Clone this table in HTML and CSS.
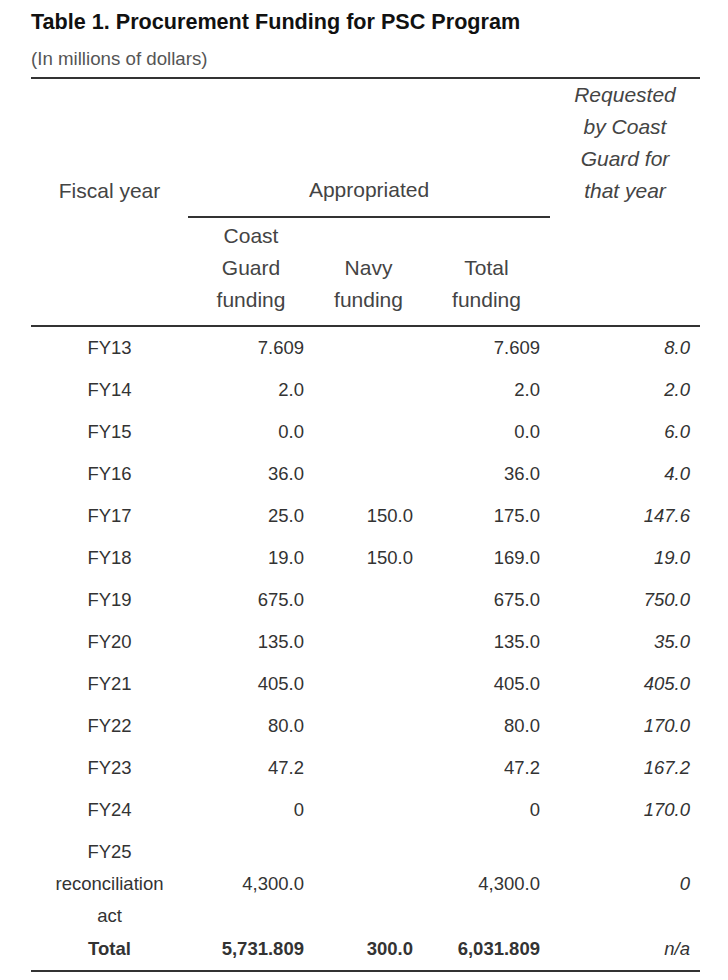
FILE: index.html
```html
<!DOCTYPE html>
<html lang="en">
<head>
<meta charset="utf-8">
<title>Table 1. Procurement Funding for PSC Program</title>
<link rel="stylesheet" href="styles.css">
</head>
<body>
<div class="page">
  <h1 class="title">Table 1. Procurement Funding for PSC Program</h1>
  <p class="subtitle">(In millions of dollars)</p>
  <table class="funding">
    <colgroup>
      <col class="c-year">
      <col class="c-cg">
      <col class="c-navy">
      <col class="c-total">
      <col class="c-req">
    </colgroup>
    <thead>
      <tr class="head-top">
        <th class="h-year">Fiscal year</th>
        <th class="h-approp" colspan="3">Appropriated</th>
        <th class="h-req">Requested<br>by Coast<br>Guard for<br>that year</th>
      </tr>
      <tr class="head-sub">
        <th></th>
        <th>Coast<br>Guard<br>funding</th>
        <th>Navy<br>funding</th>
        <th>Total<br>funding</th>
        <th></th>
      </tr>
    </thead>
    <tbody>
      <tr><td class="year">FY13</td><td class="num">7.609</td><td class="num"></td><td class="num">7.609</td><td class="num req">8.0</td></tr>
      <tr><td class="year">FY14</td><td class="num">2.0</td><td class="num"></td><td class="num">2.0</td><td class="num req">2.0</td></tr>
      <tr><td class="year">FY15</td><td class="num">0.0</td><td class="num"></td><td class="num">0.0</td><td class="num req">6.0</td></tr>
      <tr><td class="year">FY16</td><td class="num">36.0</td><td class="num"></td><td class="num">36.0</td><td class="num req">4.0</td></tr>
      <tr><td class="year">FY17</td><td class="num">25.0</td><td class="num">150.0</td><td class="num">175.0</td><td class="num req">147.6</td></tr>
      <tr><td class="year">FY18</td><td class="num">19.0</td><td class="num">150.0</td><td class="num">169.0</td><td class="num req">19.0</td></tr>
      <tr><td class="year">FY19</td><td class="num">675.0</td><td class="num"></td><td class="num">675.0</td><td class="num req">750.0</td></tr>
      <tr><td class="year">FY20</td><td class="num">135.0</td><td class="num"></td><td class="num">135.0</td><td class="num req">35.0</td></tr>
      <tr><td class="year">FY21</td><td class="num">405.0</td><td class="num"></td><td class="num">405.0</td><td class="num req">405.0</td></tr>
      <tr><td class="year">FY22</td><td class="num">80.0</td><td class="num"></td><td class="num">80.0</td><td class="num req">170.0</td></tr>
      <tr><td class="year">FY23</td><td class="num">47.2</td><td class="num"></td><td class="num">47.2</td><td class="num req">167.2</td></tr>
      <tr><td class="year">FY24</td><td class="num">0</td><td class="num"></td><td class="num">0</td><td class="num req">170.0</td></tr>
      <tr class="multi"><td class="year">FY25<br>reconciliation<br>act</td><td class="num">4,300.0</td><td class="num"></td><td class="num">4,300.0</td><td class="num req">0</td></tr>
      <tr class="total"><td class="year">Total</td><td class="num">5,731.809</td><td class="num">300.0</td><td class="num">6,031.809</td><td class="num req">n/a</td></tr>
    </tbody>
  </table>
</div>
</body>
</html>
```

FILE: styles.css
```css
html, body {
  margin: 0;
  padding: 0;
  background: #ffffff;
}

body {
  font-family: "Liberation Sans", Arial, Helvetica, sans-serif;
  color: #333333;
}

.page {
  padding: 10px 0 0 31px;
}

.title {
  margin: 0;
  font-size: 21.6px;
  line-height: 24px;
  font-weight: 700;
  color: #111111;
}

.subtitle {
  margin: 14px 0 0 0;
  font-size: 18.7px;
  line-height: 21px;
  color: #555555;
}

.funding {
  margin-top: 8px;
  width: 669px;
  border-collapse: collapse;
  table-layout: fixed;
}

.c-year { width: 157px; }
.c-cg { width: 126px; }
.c-navy { width: 109px; }
.c-total { width: 127px; }
.c-req { width: 150px; }

.funding th {
  font-size: 21px;
  line-height: 32px;
  font-weight: 400;
  color: #444444;
  text-align: center;
  vertical-align: bottom;
  padding: 0 10px;
}

.head-top th {
  border-top: 2px solid #333333;
  padding-bottom: 10px;
}

.h-approp {
  border-bottom: 2px solid #333333;
}

.h-req {
  font-style: italic;
}

.head-sub th {
  padding-top: 2px;
  padding-bottom: 9px;
  border-bottom: 2px solid #333333;
}

.funding td {
  font-size: 18.5px;
  line-height: 32px;
  padding: 5px 10px;
  vertical-align: middle;
  color: #333333;
}

.funding td.year {
  text-align: center;
}

.funding td.num {
  text-align: right;
}

.funding td.req {
  font-style: italic;
}

.multi td {
  padding-bottom: 0;
}

.total td {
  padding-top: 1px;
  font-weight: 700;
  border-bottom: 2px solid #333333;
}

.total td.req {
  font-weight: 400;
}
```
